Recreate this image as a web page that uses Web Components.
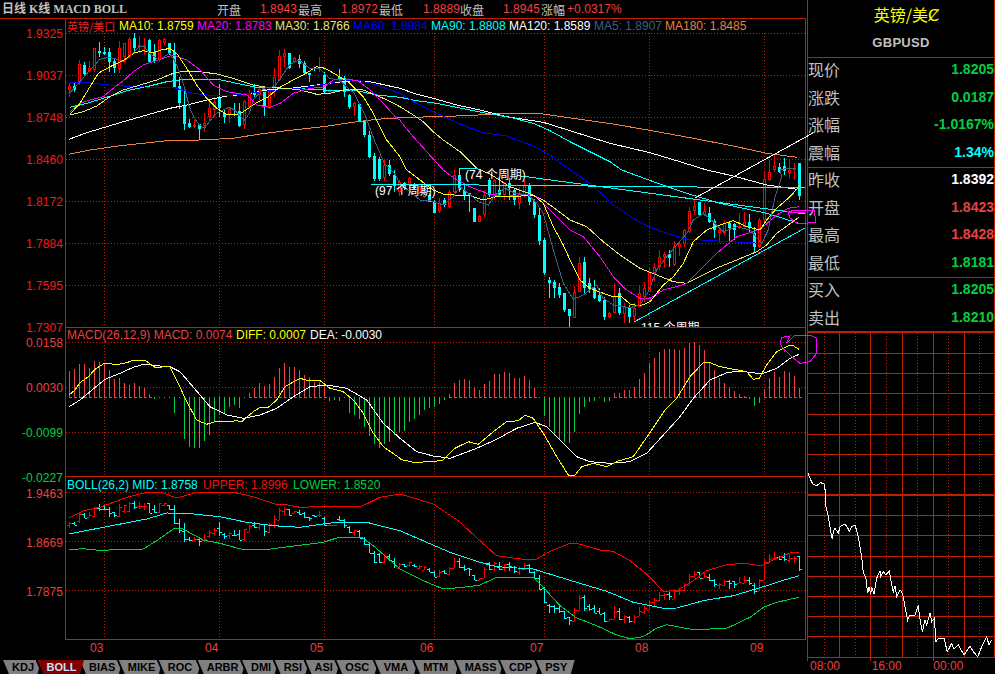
<!DOCTYPE html>
<html lang="zh"><head><meta charset="utf-8"><title>GBPUSD</title>
<style>
html,body{margin:0;padding:0;background:#000;}
body{width:995px;height:674px;overflow:hidden;font-family:"Liberation Sans","Noto Sans CJK SC",sans-serif;}
</style></head>
<body>
<fx-terminal>
  <fx-topbar slot="left">
    <b slot="title">日线 K线 MACD BOLL</b>
    <span style="width:43px">开盘</span><i style="width:38px">1.8943</i>
    <span style="width:43px">最高</span><i style="width:38px">1.8972</i>
    <span style="width:44px">最低</span><i style="width:37px">1.8889</i>
    <span style="width:43px">收盘</span><i style="width:38px">1.8945</i>
    <span style="width:26px">涨幅</span><i>+0.0317%</i>
  </fx-topbar>

  <fx-pane slot="left" id="mainPane" top="19" height="308" grid="33,75,117,159,201,243,285,327" vtop="33">
    <fx-axis slot="axis" pad="8" gap="28">
      <span style="color:#f81818">1.9325</span><span style="color:#f81818">1.9037</span><span style="color:#f81818">1.8748</span><span style="color:#f81818">1.8460</span><span style="color:#f81818">1.8172</span><span style="color:#f81818">1.7884</span><span style="color:#f81818">1.7595</span><span style="color:#f81818">1.7307</span>
    </fx-axis>
    <fx-legend slot="legend">
      <span style="color:#f02020;width:52px;font-size:11px;font-family:'Noto Sans CJK SC','Liberation Sans',sans-serif">英镑/美口</span>
      <span style="color:#ffff00;width:78px">MA10: 1.8759</span>
      <span style="color:#ff00ff;width:78px">MA20: 1.8783</span>
      <span style="color:#e8e878;width:78px">MA30: 1.8766</span>
      <span style="color:#0000ff;width:78px">MA60: 1.8984</span>
      <span style="color:#00ffff;width:78px">MA90: 1.8808</span>
      <span style="color:#ffffff;width:85px">MA120: 1.8589</span>
      <span style="color:#3f5f80;width:71px">MA5: 1.8907</span>
      <span style="color:#f08040">MA180: 1.8485</span>
    </fx-legend>
    <fx-note x="375" y="184" slot="note">(97 个周期)</fx-note>
    <fx-note x="465" y="168" slot="note">(74 个周期)</fx-note>
    <fx-note x="641" y="321" slot="note">115 个周期</fx-note>
  </fx-pane>

  <fx-pane slot="left" id="macdPane" line top="328" height="148" grid="342,387,432" vtop="342">
    <fx-axis slot="axis" pad="8" gap="31">
      <span style="color:#e84040">0.0158</span><span style="color:#e84040">0.0030</span><span style="color:#00d040">-0.0099</span><span style="color:#00d040">-0.0227</span>
    </fx-axis>
    <fx-legend slot="legend">
      <span style="color:#e84040;width:169px">MACD(26,12,9) MACD: 0.0074</span>
      <span style="color:#ffff00;width:74px">DIFF: 0.0007</span>
      <span style="color:#ffffff">DEA: -0.0030</span>
    </fx-legend>
  </fx-pane>

  <fx-pane slot="left" id="bollPane" line bottom top="478" height="162" grid="493,542,591" vtop="493">
    <fx-axis slot="axis" pad="10" gap="35">
      <span style="color:#e84040">1.9463</span><span style="color:#e84040">1.8669</span><span style="color:#e84040">1.7875</span>
    </fx-axis>
    <fx-legend slot="legend" style="margin-top:1px">
      <span style="color:#00ffff;width:136px">BOLL(26,2) MID: 1.8758</span>
      <span style="color:#f01010;width:90px">UPPER: 1.8996</span>
      <span style="color:#00d040">LOWER: 1.8520</span>
    </fx-legend>
  </fx-pane>

  <fx-xaxis slot="left">
    <span style="width:115px">03</span><span style="width:105px">04</span><span style="width:110px">05</span><span style="width:110px">06</span><span style="width:105px">07</span><span style="width:115px">08</span><span>09</span>
  </fx-xaxis>

  <fx-tabs slot="left">
    <fx-tab>KDJ</fx-tab><fx-tab active>BOLL</fx-tab><fx-tab>BIAS</fx-tab><fx-tab>MIKE</fx-tab><fx-tab extra="2">ROC</fx-tab><fx-tab>ARBR</fx-tab><fx-tab>DMI</fx-tab><fx-tab>RSI</fx-tab><fx-tab>ASI</fx-tab><fx-tab extra="2">OSC</fx-tab><fx-tab extra="2.5">VMA</fx-tab><fx-tab extra="4">MTM</fx-tab><fx-tab>MASS</fx-tab><fx-tab extra="0.5">CDP</fx-tab><fx-tab>PSY</fx-tab>
  </fx-tabs>

  <fx-quote slot="right">
    <fx-title name="英镑/美Ȼ" code="GBPUSD"></fx-title>
    <fx-group rows="4">
      <fx-row label="现价" value="1.8205" color="#00d040"></fx-row>
      <fx-row label="涨跌" value="0.0187" color="#00d040"></fx-row>
      <fx-row label="涨幅" value="-1.0167%" color="#00d040"></fx-row>
      <fx-row label="震幅" value="1.34%" color="#00ffff"></fx-row>
    </fx-group>
    <fx-group rows="4">
      <fx-row label="昨收" value="1.8392" color="#ffffff"></fx-row>
      <fx-row label="开盘" value="1.8423" color="#e84040"></fx-row>
      <fx-row label="最高" value="1.8428" color="#e84040"></fx-row>
      <fx-row label="最低" value="1.8181" color="#00d040"></fx-row>
    </fx-group>
    <fx-group rows="2">
      <fx-row label="买入" value="1.8205" color="#00d040"></fx-row>
      <fx-row label="卖出" value="1.8210" color="#00d040"></fx-row>
    </fx-group>
  </fx-quote>
  <fx-intraday slot="right"></fx-intraday>
</fx-terminal>

<script>
const LINE='#c02000';
const sheet=(css)=>`<style>${css}</style>`;

/* helpers: data are read from 3x crops, so z() maps them to page pixels */
const z=(ox,oy,a)=>{const o=[];for(let i=0;i<a.length;i+=2)o.push((ox+a[i]/3).toFixed(1)+','+(oy+a[i+1]/3).toFixed(1));return o;};
const pl=(c,pts,w)=>`<polyline fill="none" stroke="${c}" stroke-width="${w||1}" points="${pts.join(' ')}"/>`;
const ln=(x1,y1,x2,y2,c,extra)=>`<line x1="${x1}" y1="${y1}" x2="${x2}" y2="${y2}" stroke="${c}" ${extra||''}/>`;

/* candles: type, body top, body bottom, wick top, wick bottom (crop px) */
const C1=[['r',258,270,250,290],['c',258,270,250,275],['r',193,245,180,255],['c',195,222,185,225],['r',205,212,182,215],['r',145,210,145,215],['c',153,160,125,170],['c',155,162,142,165],['c',155,185,145,215],['c',182,205,178,218],['r',143,208,123,220],['r',130,172,130,190],['r',117,170,110,178],['c',113,145,100,158],['r',135,140,108,160],['r',135,142,113,165],['c',120,185,118,188],['c',155,182,133,190],['r',120,180,118,185],['r',118,130,115,135],['c',130,160,128,165],['c',155,262,130,265],['c',258,308,232,328],['c',315,372,262,390],['c',370,382,358,385],['r',375,382,360,385],['c',372,388,372,420],['r',370,378,340,395],['r',325,350,305,365],['r',305,330,290,350],['c',295,325,252,350],['c',340,350,330,368],['r',328,345,325,368],['c',342,345,310,348],['c',333,378,308,380],['r',303,375,300,387],['r',280,320,270,325],['c',275,285,253,290],['r',268,285,262,310],['c',268,318,263,348],['r',268,325,262,328],['r',230,275,205,290],['r',168,240,150,240],['r',160,172,148,200],['c',158,205,158,208],['r',175,185,170,190],['c',178,192,165,205],['c',188,220,182,222],['c',218,225,218,245],['c',205,208,200,212],['r',200,204,172,215],['c',225,275,215,278],['r',270,275,268,278],['r',272,275,270,278],['c',232,240,208,245],['c',235,275,228,290],['c',285,320,283,328],['r',310,320,305,348],['c',312,362,310,365],['c',362,405,360,410],['c',405,470,392,475]];
const C1b=[['c',156,179,153,181],['c',159,179,157,181],['r',165,178,160,181],['c',165,174,160,176],['c',175,186,170,192],['r',182,192,180,196]];
const C2=[['c',40,55,35,60],['r',25,45,20,60],['c',45,55,40,60],['r',52,68,48,72],['r',58,80,50,85],['c',75,95,70,97],['c',95,128,90,130],['r',100,122,85,128],['c',90,105,85,110],['r',65,112,60,115],['r',15,65,0,70],['c',15,60,0,65],['c',60,75,45,90],['c',70,74,68,125],['c',115,155,113,157],['r',138,155,136,157],['r',75,135,60,140],['c',30,75,25,80],['r',30,75,28,90],['c',60,75,25,80],['r',40,75,35,90],['c',40,55,25,90],['c',60,90,55,105],['r',70,100,50,118],['r',45,75,30,80],['c',45,95,40,105],['c',92,135,88,145],['c',135,212,115,225],['c',210,310,205,315],['c',330,340,320,385],['c',335,355,330,385],['c',350,375,340,385],['c',370,420,368,425],['c',418,437,418,470],['r',365,445,348,445],['r',278,365,262,365],['c',275,355,262,370],['c',338,358,325,370],['c',355,385,330,388],['c',375,393,355,395],['c',390,442,380,450],['r',428,442,426,444],['r',378,428,340,430],['c',370,430,355,435],['r',412,432,400,460],['c',415,440,405,460],['r',415,442,400,455],['r',368,410,345,412],['r',355,382,335,395],['r',305,365,290,365],['r',292,310,278,335],['r',262,292,240,300],['r',252,262,245,295],['c',252,265,240,290],['r',228,285,212,288],['r',222,230,212,258],['r',180,222,178,230],['r',122,185,112,190],['r',108,122,88,135],['c',97,135,95,138],['r',122,135,98,138],['c',128,155,112,158],['c',152,180,148,205],['r',180,190,170,220],['r',160,188,150,195],['c',160,175,155,215],['c',163,180,158,210],['r',168,175,130,178],['r',155,172,125,175],['c',155,175,132,190],['c',188,232,170,248],['r',150,232,145,235],['r',28,150,6,155]];
const C2b=[['r',172,180,160,181],['r',166,170,154,172],['c',167,172,163,173],['c',166,171,158,175],['r',170,173,160,178],['r',168,170,163,180],['c',163,196,163,200]];
const CANDLES=[
  ...C1.map(c=>[c[0],c[1]/3,c[2]/3,c[3]/3,c[4]/3]),
  ...C1b,
  ...C2.map(c=>[c[0],170+c[1]/3,170+c[2]/3,170+c[3]/3,170+c[4]/3]),
  ...C2b
].map(c=>[c[0],...c.slice(1).map(Math.round)]);
const cx=i=>69+5*i;
const COL={r:'#ff0000',c:'#00ffff'};

function drawCandles(){
  let s='';
  CANDLES.forEach((c,i)=>{
    const x=cx(i),col=COL[c[0]],h=Math.max(1,c[2]-c[1]);
    s+=`<rect x="${x}" y="${c[3]}" width="1" height="${Math.max(1,c[4]-c[3])}" fill="${col}"/>`;
    s+=`<rect x="${x-1}" y="${c[1]}" width="3" height="${h}" fill="${col}"/>`;
    if(c[0]==='r'&&h>2)s+=`<rect x="${x}" y="${c[1]+1}" width="1" height="${h-2}" fill="#000"/>`;
  });
  return s;
}
function drawBars(){
  const by=y=>Math.round(501.5+(y-33)*.4231);
  let s='';
  CANDLES.forEach((c,i)=>{
    const x=cx(i),col=COL[c[0]];
    const hi=by(c[3]),lo=by(c[4]),t=by(c[1]),b=by(c[2]);
    const op=c[0]==='r'?b:t,cl=c[0]==='r'?t:b;
    s+=`<rect x="${x}" y="${hi}" width="1" height="${Math.max(1,lo-hi)}" fill="${col}"/>`;
    s+=`<rect x="${x-2}" y="${op}" width="2" height="1" fill="${col}"/>`;
    s+=`<rect x="${x+1}" y="${cl}" width="2" height="1" fill="${col}"/>`;
  });
  return s;
}

const MA={
 ma180:[...z(0,0,[207,463,270,450,360,437,430,430,500,422,600,420,700,415,780,402,860,392,970,380,1050,368,1130,358,1200,353]),...z(400,0,[100,350,200,347,320,340,430,342,520,355,640,372,760,393,880,415,1000,438,1100,460,1190,472])],
 ma120:[...z(0,0,[207,418,260,398,320,380,380,362,440,345,510,325,560,315,620,300,680,288,740,282,800,270,870,265,930,258,1000,248,1060,242,1110,245,1200,265]),...z(400,0,[50,283,100,295,170,315,240,330,320,350,430,367,520,395,630,430,750,458,840,485,920,510]),...z(400,170,[1000,18,1100,45,1190,58])],
 ma90:[...z(0,0,[210,322,260,310,320,292,380,272,440,260,500,245,560,237,650,237,710,250,770,262,860,265,940,268,1010,272,1070,272,1130,285,1200,292]),...z(400,0,[50,302,110,310,170,322,250,338,330,352,400,370,450,392,510,425,570,455,630,485,665,510]),...z(400,170,[760,35,860,70,960,100,1100,130,1197,160])],
 ma60:[...z(0,0,[210,247,260,248,330,255,400,260,460,262,520,262,570,278,620,285,700,285,760,278,830,270,900,265,960,255,1020,243,1070,240,1130,255,1200,280]),...z(400,0,[50,310,100,335,150,358,200,380,250,398,320,408,400,438,450,465,510,510]),...z(400,170,[570,40,640,105,700,145,750,172,800,190,860,207,930,212,1000,215,1080,220,1175,222])],
 ma30:[...z(0,0,[210,345,250,335,290,318,330,290,370,270,420,255,470,240,520,220,545,215,600,215,650,222,700,235,760,255,800,262,860,265,900,270,950,283,990,280,1040,268,1090,270,1150,295,1200,320]),...z(400,0,[40,345,70,365,100,395,130,420,180,455,230,505]),...z(400,170,[270,12,330,50,400,75,430,90,470,120,510,150,560,170,610,215,660,255,720,295,770,315,820,335,860,340,910,315,960,290,1010,270,1070,245,1100,225,1130,190,1165,165,1197,142])],
 ma20:[...z(0,0,[210,335,240,310,270,300,310,290,340,265,373,240,400,215,430,195,460,185,490,175,520,165,560,180,600,210,640,255,680,275,740,285,770,315,810,322,840,310,880,280,930,265,970,262,1000,240,1040,237,1075,243,1110,270,1150,310,1190,355,1200,360]),...z(400,0,[0,362,40,410,80,455,125,505]),...z(400,170,[130,0,170,30,210,50,260,70,310,80,380,72,410,80,450,120,510,180,550,200,600,260,640,320,680,360,720,385,750,385,790,360,830,350,860,340,900,300,950,250,1010,200,1060,185,1090,170,1130,135,1165,115,1197,110])],
 ma10:[...z(0,0,[210,342,240,310,270,260,295,220,330,200,373,180,400,160,430,152,460,158,490,148,510,146,530,160,560,205,590,255,620,295,650,325,680,343,715,345,745,325,775,305,805,290,835,265,870,245,910,225,950,200,975,205,1010,225,1050,250,1090,290,1120,340,1160,420,1200,470]),...z(400,170,[20,0,60,30,100,60,130,72,165,75,205,75,250,90,290,80,340,80,400,75,430,100,460,170,490,225,510,270,540,330,570,355,610,370,640,380,665,380,690,402,720,408,750,395,790,345,820,320,850,280,880,215,920,180,960,165,1000,152,1040,170,1080,180,1100,150,1130,115,1170,80,1197,50])],
 ma5:[...z(0,0,[210,278,240,245,268,212,283,198,298,178,328,172,358,180,373,185,388,170,418,140,433,140,448,160,478,180,508,160,523,180,538,215,553,260,568,320,583,355,598,375,613,385,628,365,643,345,658,335,673,328,688,322,703,330,718,345,733,362,748,340,760,300,790,265,823,260,838,240,868,195,898,180,928,205,958,205,988,235,1018,240,1033,255,1063,280,1093,340,1123,420,1153,490,1183,520]),...z(400,170,[0,40,60,90,90,92,130,105,160,80,180,50,205,70,235,95,265,105,285,75,315,55,345,70,385,75,410,100,430,130,460,240,490,340,520,388,550,375,590,345,610,385,640,405,690,413,720,405,745,365,770,300,800,260,830,225,860,190,880,150,910,130,940,155,970,185,1010,170,1050,180,1085,220,1105,180,1125,80,1145,20]),'780,170','784,169','795,168']
};
function drawMain(){
  let s=drawCandles();
  s+=pl('#f08040',MA.ma180)+pl('#ffffff',MA.ma120)+pl('#00ffff',MA.ma90)+pl('#0000ff',MA.ma60)+pl('#e8e878',MA.ma30)+pl('#ff00ff',MA.ma20)+pl('#ffff00',MA.ma10)+pl('#3f5f80',MA.ma5);
  /* trend lines drawn by the user */
  s+=ln(369,184,805,188,'#00ffff')+ln(521,176,805,214,'#00ffff')+ln(634,322,805,228,'#00ffff');
  s+=pl('#00ffff',['459,190','459,168','478,168']);
  s+=ln(695,198,813,133,'#ffffff');
  s+=pl('#ff00ff',['788,212','795,210','814,210','816,222','798,224','790,218','788,212','793,213','805,212']);
  return s;
}
function drawMacd(){
  const base=397;
  const h1=[152,148,132,132,145,123,125,133,150,178,175,190,195,190,198,205,222,238,235,233,233,280,232,357,382,384,383,362,345,305,285,278,260,255,265,235,218,203,190,198,192,170,145,130,140,142,150,165,172,185,185,198,242,240,243,232,278,285,298,320,347,372,385,372,367,345,335];
  const h2=[332,305,298,285,270,263,260,252,240,222,190,180,178,180,202,210,192,183,162,162,155,160,175,175,168,180,203,233,287,320,348,358,365,368,335,282,260,245,242,235,245,242,220,220,210,210,200,177,158,128,113,97,87,88,88,90,84,68,67,75,90,127,150,175,188,200,212,222,229,236,258,248,206,175,155,172,153,157,168,203];
  const ys=[...h1,...h2].map(v=>Math.round(320+v/3));
  let s='';
  ys.forEach((y,i)=>{
    const x=cx(i),up=y<base,c=up?'#f04040':'#00d040';
    const t=up?y:base,hh=Math.max(1,Math.abs(y-base));
    s+=`<rect x="${x}" y="${t}" width="1" height="${hh}" fill="${c}"/>`;
    if(up)s+=`<rect x="${x}" y="397" width="3" height="1" fill="${c}"/>`;
  });
  const dea=[...z(0,320,[207,260,240,240,270,215,315,178,360,160,400,142,435,132,465,137,510,140,540,155,570,190,630,260,680,285,730,295,780,285,830,265,880,230,930,200,980,195,1040,205,1100,240,1150,310,1200,355]),...z(400,320,[50,395,100,408,150,415,230,385,290,358,350,325,405,307,440,320,490,370,530,410,570,425,630,430,690,425,740,400,790,345,840,290,880,235,930,180,980,158,1020,153,1085,162,1130,145,1170,115,1197,103])];
  const diff=[...z(0,320,[207,225,225,210,240,188,265,170,285,148,310,132,330,130,345,135,380,128,400,121,435,121,465,142,510,140,530,180,560,245,590,300,620,313,650,303,680,306,710,302,725,305,760,275,780,262,805,262,830,240,855,200,900,175,925,182,960,182,990,205,1030,215,1060,240,1090,280,1120,340,1150,380,1200,415]),...z(400,320,[0,418,40,427,100,425,130,420,165,385,205,365,235,373,280,335,320,305,355,302,375,286,400,295,430,340,470,410,505,465,525,465,545,440,580,430,620,440,655,423,700,410,745,345,795,270,830,235,870,170,910,128,930,128,960,140,1040,155,1060,178,1078,175,1100,135,1130,95,1165,78,1180,77,1197,88])];
  s+=pl('#ffffff',dea)+pl('#ffff00',diff);
  const mag=[...z(400,320,[1155,95,1140,70,1145,52,1170,48,1160,70,1185,46,1230,46]),...z(800,330,[30,15,50,25,50,70,30,95,0,100]),...z(400,320,[1200,130,1175,110,1150,85])];
  s+=pl('#ff00ff',mag);
  return s;
}
function drawBoll(){
  let s=drawBars();
  const up=[...z(0,475,[207,132,250,110,300,100,380,70,440,55,490,57,530,72,590,55,700,55,760,68,830,92,860,92,900,100,990,97,1085,97,1140,70,1200,60]),...z(400,475,[50,75,100,90,175,140,240,200,290,245,340,252,380,257,410,255,450,232,510,208,530,208,600,228,640,232,690,260,740,300,790,352,830,350,880,320,920,290,980,272,1030,268,1085,275,1110,262,1175,235,1197,235])];
  const mid=[...z(0,475,[207,180,310,160,440,135,500,117,560,118,660,128,740,145,820,155,900,160,970,150,1010,145,1100,145,1200,170]),...z(400,475,[80,205,150,235,240,265,290,278,400,285,520,322,620,352,700,385,790,403,830,402,910,380,1000,365,1100,335,1130,325,1197,305])];
  const low=[...z(0,475,[207,227,250,224,310,230,350,225,430,225,470,200,520,165,545,163,610,198,660,208,730,227,800,227,850,220,970,205,1010,192,1085,190,1120,215,1200,285]),...z(400,475,[70,320,130,345,190,340,240,333,290,310,400,310,430,340,480,395,530,432,590,455,650,483,690,494,730,488,770,462,800,452,880,467,980,463,1050,430,1090,400,1130,385,1197,370])];
  s+=pl('#ff0000',up)+pl('#00ffff',mid)+pl('#00d040',low);
  return s;
}
const DRAW={mainPane:drawMain,macdPane:drawMacd,bollPane:drawBoll};

class Base extends HTMLElement{
  constructor(){super();this.attachShadow({mode:'open'});}
}
customElements.define('fx-terminal',class extends Base{
  connectedCallback(){this.shadowRoot.innerHTML=sheet(`
    :host{display:grid;grid-template-columns:807px 188px;width:995px;height:674px;background:#000;overflow:hidden;color:#c0c0c0;font:12px/14px "Liberation Sans","Noto Sans CJK SC",sans-serif}
    .l{display:flex;flex-direction:column;position:relative;z-index:1;min-width:0}
    .r{display:flex;flex-direction:column;min-width:0}
  `)+`<div class="l"><slot name="left"></slot></div><div class="r"><slot name="right"></slot></div>`;}
});
customElements.define('fx-topbar',class extends Base{
  connectedCallback(){this.shadowRoot.innerHTML=sheet(`
    :host{display:flex;height:18px;box-sizing:content-box;border-bottom:1px solid ${LINE};width:806px;font:12px/18px "Noto Sans CJK SC","Liberation Sans",sans-serif;color:#c0c0c0;white-space:nowrap;padding:0}
    .t{display:block;width:217px;padding-left:2px;box-sizing:border-box;line-height:16px}
    ::slotted(b){font:bold 12px/16px "Liberation Serif","Noto Sans CJK SC",serif}
    .v{display:flex;padding-top:1px;height:17px}
    ::slotted(span){display:block;flex:none}
    ::slotted(i){display:block;flex:none;font:12px/17px "Liberation Sans",sans-serif;color:#f04040;letter-spacing:.05px}
  `)+`<div class="t"><slot name="title"></slot></div><div class="v"><slot></slot></div>`;}
});
customElements.define('fx-pane',class extends Base{
  connectedCallback(){
    const top=+this.getAttribute('top'),h=+this.getAttribute('height');
    const grid=this.getAttribute('grid').split(',').map(Number),vt=+this.getAttribute('vtop');
    let g='';
    const dot=`stroke-dasharray="1 2"`;
    grid.forEach(y=>g+=ln(66,y+.5,805,y+.5,LINE,dot));
    [104,219,324,434,544,649,764].forEach(x=>g+=ln(x+.5,vt,x+.5,top+h,LINE,dot));
    const line=this.hasAttribute('line'),bottom=this.hasAttribute('bottom');
    this.shadowRoot.innerHTML=sheet(`
      :host{display:flex;width:806px;height:${h+(line?1:0)+(bottom?1:0)}px;flex:none}
      .axis{width:65px;flex:none;${line?'padding-top:1px;':''}box-sizing:border-box}
      .plot{flex:1;position:relative;border-left:1px solid ${LINE};border-right:1px solid ${LINE};${line?`border-top:1px solid ${LINE};`:''}${bottom?`border-bottom:1px solid ${LINE};`:''}}
      svg{position:absolute;left:0;top:0;overflow:visible;display:block}
      .notes{position:absolute;inset:0;overflow:hidden}
      .leg{position:absolute;left:1px;top:0;right:0}
    `)+`<div class="axis"><slot name="axis"></slot></div><div class="plot">
      <svg width="739" height="${h}" viewBox="66 ${top} 739 ${h}" shape-rendering="crispEdges">${g}${DRAW[this.id]()}</svg>
      <div class="notes"><slot name="note"></slot></div>
      <div class="leg"><slot name="legend"></slot></div></div>`;
  }
});
customElements.define('fx-axis',class extends Base{
  connectedCallback(){this.shadowRoot.innerHTML=sheet(`
    :host{display:grid;grid-auto-rows:14px;row-gap:${this.getAttribute('gap')}px;padding:${this.getAttribute('pad')}px 2px 0 0;justify-items:end;font:12px/14px "Liberation Sans",sans-serif;letter-spacing:.05px}
    ::slotted(span){display:block}
  `)+`<slot></slot>`;}
});
customElements.define('fx-legend',class extends Base{
  connectedCallback(){this.shadowRoot.innerHTML=sheet(`
    :host{display:flex;font:12px/14px "Liberation Sans",sans-serif;white-space:nowrap}
    ::slotted(span){display:block;flex:none}
  `)+`<slot></slot>`;}
});
customElements.define('fx-note',class extends Base{
  connectedCallback(){const p=this.closest('fx-pane');
    const ox=66,oy=+p.getAttribute('top');
    this.shadowRoot.innerHTML=sheet(`
    :host{position:absolute;left:${this.getAttribute('x')-ox}px;top:${this.getAttribute('y')-oy}px;color:#fff;font:12px/14px "Liberation Sans","Noto Sans CJK SC",sans-serif;white-space:nowrap}
  `)+`<slot></slot>`;}
});
customElements.define('fx-xaxis',class extends Base{
  connectedCallback(){this.shadowRoot.innerHTML=sheet(`
    :host{display:flex;height:20px;padding-left:90px;padding-top:1px;box-sizing:border-box;color:#e84040;font:12px/14px "Liberation Sans",sans-serif;flex:none}
    ::slotted(span){display:block;flex:none}
  `)+`<slot></slot>`;}
});
customElements.define('fx-tabs',class extends Base{
  connectedCallback(){this.shadowRoot.innerHTML=sheet(`
    :host{display:flex;height:14px;padding-left:7px;flex:none}
  `)+`<slot></slot>`;}
});
customElements.define('fx-tab',class extends Base{
  connectedCallback(){const a=this.hasAttribute('active'),e=+(this.getAttribute('extra')||0);
    this.shadowRoot.innerHTML=sheet(`
    :host{display:inline-grid;position:relative;${a?'z-index:2;':''}margin-left:-4px;flex:none;height:14px;font:bold 11px/14px "Liberation Sans",sans-serif;color:${a?'#c8e4ff':'#000'}}
    .edge,.shape,.txt{grid-area:1/1}
    .edge,.shape{clip-path:polygon(0 0,100% 0,calc(100% - 4px) 100%,6px 100%)}
    .edge{background:#000;transform:translateX(-2px)}
    .shape{background:${a?'#800000':'#808080'}}
    .txt{position:relative;padding:0 ${7.5+e}px 0 9px;white-space:nowrap}
  `)+`<div class="edge"></div><div class="shape"></div><div class="txt"><slot></slot></div>`;}
});
customElements.define('fx-quote',class extends Base{
  connectedCallback(){this.shadowRoot.innerHTML=sheet(`
    :host{display:block;border-left:1px solid ${LINE};border-right:1px solid ${LINE};width:188px;box-sizing:border-box;border-bottom:2px solid ${LINE};flex:none}
  `)+`<slot></slot>`;}
});
customElements.define('fx-title',class extends Base{
  connectedCallback(){this.shadowRoot.innerHTML=sheet(`
    :host{display:flex;flex-direction:column;align-items:center;height:58px;box-sizing:border-box;border-bottom:1px solid ${LINE};padding:4px 0 0 11px}
    .n{color:#ffff00;font:16px/20px "Noto Sans CJK SC","DejaVu Sans",sans-serif;height:20px}
    .c{color:#c0c0c0;font:bold 13px/16px "Liberation Sans",sans-serif;margin:11px 11px 0 0;letter-spacing:.3px}
  `)+`<div class="n">${this.getAttribute('name')}</div><div class="c">${this.getAttribute('code')}</div>`;}
});
customElements.define('fx-group',class extends Base{
  connectedCallback(){const r=+this.getAttribute('rows');
    this.shadowRoot.innerHTML=sheet(`
    :host{display:grid;grid-auto-rows:27.5px;align-content:start;height:${r===4?110:53}px;box-sizing:border-box;${r===4?`border-bottom:1px solid ${LINE};`:''}}
  `)+`<slot></slot>`;}
});
customElements.define('fx-row',class extends Base{
  connectedCallback(){this.shadowRoot.innerHTML=sheet(`
    :host{display:flex;justify-content:space-between;align-items:center;white-space:nowrap;box-sizing:border-box;padding-bottom:5px}
    .l{color:#c0c0c0;font:16px/20px "Noto Sans CJK SC",sans-serif}
    .v{font:bold 14px/20px "Liberation Sans",sans-serif;color:${this.getAttribute('color')}}
  `)+`<span class="l">${this.getAttribute('label')}</span><span class="v">${this.getAttribute('value')}</span>`;}
});
customElements.define('fx-intraday',class extends Base{
  connectedCallback(){
    let g='';
    const dot=`stroke-dasharray="1 2"`;
    [353,373,393,414,434,454,474,515,535,556,576,596,616,636,657].forEach(y=>g+=ln(807,y+.5,995,y+.5,LINE));
    g+=`<rect x="807" y="494" width="188" height="2" fill="${LINE}"/>`;
    [807,839,870,902,933,964,994].forEach(x=>g+=ln(x+.5,333,x+.5,657,LINE));
    [824,855,886,917,948,979].forEach(x=>g+=ln(x+.5,333,x+.5,657,LINE,dot));
    [807,870,933].forEach(x=>g+=ln(x+.5,657,x+.5,661,LINE));
    const pts=z(800,330,[24,430,30,445,38,462,50,468,56,462,62,458,72,462,77,490,78,530,85,560,92,605,97,628,100,605,105,595,112,605,115,610,120,590,135,582,142,592,148,603,155,590,165,585,175,620,185,680,190,730,197,740,203,790,207,770,212,792,215,770,222,793,230,745,240,722,240,745,250,725,258,735,268,722,272,750,280,785,285,768,290,800,300,780,305,785,310,800,315,830,323,870,330,855,345,855,355,825,358,855,367,905,375,870,380,885,390,850,395,875,403,865,408,935,415,925,432,925,442,965,455,940,462,958,475,945,492,975,510,948,520,965,533,980,545,950,560,920,567,945,575,930]);
    this.shadowRoot.innerHTML=sheet(`
      :host{display:flex;flex-direction:column;flex:1;min-height:0}
      svg{display:block;flex:none}
      .t{display:flex;height:13px;color:#e84040;font:12px/10px "Liberation Sans",sans-serif;padding-left:3px}
      .t span{width:62.5px}
    `)+`<svg width="188" height="328" viewBox="807 333 188 328" shape-rendering="crispEdges">${g}${pl('#ffffff',pts)}</svg>
      <div class="t"><span>08:00</span><span>16:00</span><span>00:00</span></div>`;
  }
});
</script>
</body></html>
